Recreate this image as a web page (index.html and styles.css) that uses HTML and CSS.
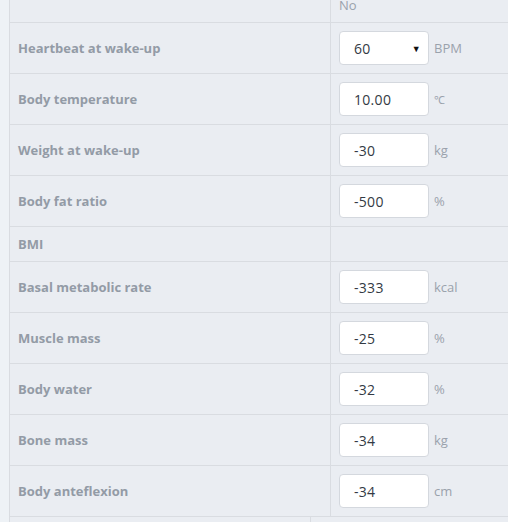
FILE: index.html
```html
<!DOCTYPE html>
<html>
<head>
<meta charset="utf-8">
<link rel="stylesheet" href="styles.css">
</head>
<body>
<div class="page">
  <div class="strip"></div>
  <div class="table">
    <div class="row head">
      <div class="cell label"></div>
      <div class="cell value"><span class="colhead">No</span></div>
    </div>
    <div class="row">
      <div class="cell label">Heartbeat at wake-up</div>
      <div class="cell value">
        <div class="field select"><span>60</span><span class="arrow">▼</span></div>
        <span class="unit">BPM</span>
      </div>
    </div>
    <div class="row">
      <div class="cell label">Body temperature</div>
      <div class="cell value"><div class="field">10.00</div><span class="unit small">℃</span></div>
    </div>
    <div class="row">
      <div class="cell label">Weight at wake-up</div>
      <div class="cell value"><div class="field">-30</div><span class="unit">kg</span></div>
    </div>
    <div class="row">
      <div class="cell label">Body fat ratio</div>
      <div class="cell value"><div class="field">-500</div><span class="unit">%</span></div>
    </div>
    <div class="row short">
      <div class="cell label">BMI</div>
      <div class="cell value"></div>
    </div>
    <div class="row">
      <div class="cell label">Basal metabolic rate</div>
      <div class="cell value"><div class="field">-333</div><span class="unit">kcal</span></div>
    </div>
    <div class="row">
      <div class="cell label">Muscle mass</div>
      <div class="cell value"><div class="field">-25</div><span class="unit">%</span></div>
    </div>
    <div class="row">
      <div class="cell label">Body water</div>
      <div class="cell value"><div class="field">-32</div><span class="unit">%</span></div>
    </div>
    <div class="row">
      <div class="cell label">Bone mass</div>
      <div class="cell value"><div class="field">-34</div><span class="unit">kg</span></div>
    </div>
    <div class="row">
      <div class="cell label">Body anteflexion</div>
      <div class="cell value"><div class="field">-34</div><span class="unit">cm</span></div>
    </div>
    <div class="footer">
      <div class="fcell first"></div>
      <div class="fcell"></div>
    </div>
  </div>
</div>
</body>
</html>
```

FILE: styles.css
```css
html, body {
  margin: 0;
  padding: 0;
  background: #eaedf2;
  font-family: "Open Sans", "Liberation Sans", sans-serif;
  overflow: hidden;
}
.page {
  display: flex;
  height: 522px;
}
.strip {
  width: 9px;
  background: #eef2f6;
  border-right: 1px solid #d9dce1;
  flex: none;
}
.table {
  flex: 1;
  display: flex;
  flex-direction: column;
}
.row {
  display: grid;
  grid-template-columns: 321px 1fr;
  height: 50px;
  border-bottom: 1px solid #d9dce1;
}
.row.head { height: 22px; }
.row.short { height: 34px; }
.cell {
  display: flex;
  align-items: center;
}
.cell.label {
  border-right: 1px solid #d9dce1;
  padding-left: 8px;
  padding-bottom: 1px;
  font-size: 13px;
  font-weight: 700;
  color: #939ba6;
}
.cell.value {
  padding-left: 8px;
  gap: 5px;
}
.head .cell { align-items: flex-start; }
.colhead {
  font-size: 13px;
  line-height: 15px;
  margin-top: -2px;
  color: #9aa2ac;
}
.field {
  box-sizing: border-box;
  width: 90px;
  height: 34px;
  background: #fff;
  border: 1px solid #d4d8de;
  border-radius: 4px;
  padding-left: 14px;
  display: flex;
  align-items: center;
  font-size: 14px;
  letter-spacing: 0.3px;
  color: #333a44;
}
.field.select {
  justify-content: space-between;
  padding-right: 7px;
}
.arrow {
  font-size: 9px;
  color: #111;
}
.unit {
  font-size: 13px;
  color: #9aa2ac;
}
.unit.small { font-size: 11px; }
.footer {
  display: flex;
  flex: 1;
}
.fcell.first {
  width: 300px;
  border-right: 1px solid #d9dce1;
}
```
